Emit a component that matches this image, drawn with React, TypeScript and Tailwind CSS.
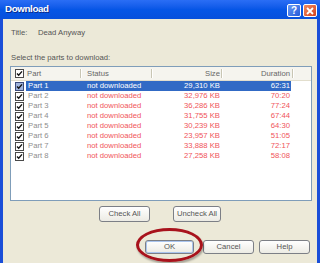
import React from "react";

const font = { fontFamily: '"Liberation Sans", Arial, sans-serif' };

function Check({ selected = false }: { selected?: boolean }) {
  return (
    <svg width="9" height="9" viewBox="0 0 9 9" className="shrink-0">
      <rect x="0.5" y="0.5" width="8" height="8" fill={selected ? "#9fb4dd" : "#ffffff"} stroke={selected ? "#3a4a7a" : "#4a4a4a"} />
      <polyline points="2,4.4 3.7,6.2 7,2.4" fill="none" stroke="#111" strokeWidth="1.4" />
    </svg>
  );
}

function Sep() {
  return <div className="w-[2px] h-[9px] border-l border-[#c9c6b4] bg-white shrink-0" />;
}

const rows = [
  ["Part 1", "29,310 KB", "62:31"],
  ["Part 2", "32,976 KB", "70:20"],
  ["Part 3", "36,286 KB", "77:24"],
  ["Part 4", "31,755 KB", "67:44"],
  ["Part 5", "30,239 KB", "64:30"],
  ["Part 6", "23,957 KB", "51:05"],
  ["Part 7", "33,888 KB", "72:17"],
  ["Part 8", "27,258 KB", "58:08"],
];

function Btn({ label, w, h, def = false }: { label: string; w: string; h: string; def?: boolean }) {
  return (
    <div
      className={`${w} ${h} flex items-center justify-center rounded-[3px] border border-[#7c7f86] bg-gradient-to-b from-white to-[#ecebe4] text-[7.7px] text-[#555] ${def ? "shadow-[inset_0_0_0_1px_#a9c4ee]" : ""}`}
    >
      {label}
    </div>
  );
}

export default function App() {
  return (
    <div className="relative w-[320px] h-[263px] overflow-hidden bg-[#1a4ed8] flex flex-col" style={font}>
      {/* title bar */}
      <div className="h-[19px] flex items-center pl-[5px] pr-[3px] bg-gradient-to-b from-[#2a6ef5] via-[#0656e6] to-[#0750dc] shrink-0">
        <span className="text-white font-bold text-[9.8px] tracking-[-0.4px] [text-shadow:1px_1px_0_#0a2a8a]">Download</span>
        <div className="ml-auto flex gap-[2px] mt-[2px]">
          <div className="w-[14px] h-[13px] rounded-[2px] border border-white bg-gradient-to-br from-[#6a9af5] to-[#2558d8] flex items-center justify-center text-white font-bold text-[10px] leading-none">?</div>
          <div className="w-[14px] h-[13px] rounded-[2px] border border-white bg-gradient-to-br from-[#f08a60] to-[#d2401c] flex items-center justify-center">
            <svg width="8" height="8" viewBox="0 0 8 8">
              <path d="M1 1 L7 7 M7 1 L1 7" stroke="white" strokeWidth="1.8" />
            </svg>
          </div>
        </div>
      </div>
      {/* body */}
      <div className="flex-1 mx-[3px] bg-[#ece9d8] flex flex-col text-[#555] text-[7.7px]">
        <div className="pt-[9px] pl-[8px] flex leading-[10px]">
          <span className="w-[27px]">Title:</span>
          <span>Dead Anyway</span>
        </div>
        <div className="mt-[15px] pl-[8px] leading-[10px]">Select the parts to download:</div>
        <div className="mt-[3px] ml-[7px] mr-[5px] h-[135px] border border-[#7f9db9] bg-white flex flex-col">
          {/* header */}
          <div className="h-[14px] flex items-center bg-[#f5f4ee] border-b border-[#e2decd] text-[#666] leading-[10px]">
            <div className="w-[71px] flex items-center pl-[4px]">
              <Check />
              <span className="ml-[3px]">Part</span>
              <div className="ml-auto"><Sep /></div>
            </div>
            <div className="w-[71px] flex items-center pl-[5px]">
              <span>Status</span>
              <div className="ml-auto"><Sep /></div>
            </div>
            <div className="w-[70px] flex items-center justify-end">
              <span className="mr-[1px]">Size</span>
              <Sep />
            </div>
            <div className="w-[71px] flex items-center justify-end">
              <span className="mr-[2px]">Duration</span>
              <Sep />
            </div>
          </div>
          {rows.map((r, i) => {
            const sel = i === 0;
            return (
              <div key={r[0]} className="h-[10px] flex items-center pl-[4px] leading-[10px]">
                <Check selected={sel} />
                <div className={`ml-[2px] flex h-[10px] ${sel ? "bg-[#316ac5] text-white" : ""}`}>
                  <span className={`w-[56px] pl-[2px] ${sel ? "" : "text-[#8e8e8e]"}`}>{r[0]}</span>
                  <span className={`w-[71px] pl-[5px] ${sel ? "" : "text-[#f0555a]"}`}>not downloaded</span>
                  <span className={`w-[70px] text-right pr-[3px] ${sel ? "" : "text-[#f0555a]"}`}>{r[1]}</span>
                  <span className={`w-[68px] text-right pr-[1px] ${sel ? "" : "text-[#f0555a]"}`}>{r[2]}</span>
                </div>
              </div>
            );
          })}
        </div>
        <div className="mt-[5px] flex justify-center gap-[23px]">
          <Btn label="Check All" w="w-[51px]" h="h-[16px]" />
          <Btn label="Uncheck All" w="w-[48px]" h="h-[16px]" />
        </div>
        <div className="mt-[18px] flex justify-end pr-[7px]">
          <Btn label="OK" w="w-[49px]" h="h-[14px]" def />
          <div className="w-[9px]" />
          <Btn label="Cancel" w="w-[51px]" h="h-[14px]" />
          <div className="w-[5px]" />
          <Btn label="Help" w="w-[51px]" h="h-[14px]" />
        </div>
      </div>
      {/* red annotation ellipse */}
      <div className="absolute left-[136px] top-[228px] w-[67px] h-[34px] rounded-[50%] border-[3px] border-[#a8121c] shadow-[1px_2px_2px_rgba(0,0,0,0.3)]" />
    </div>
  );
}
